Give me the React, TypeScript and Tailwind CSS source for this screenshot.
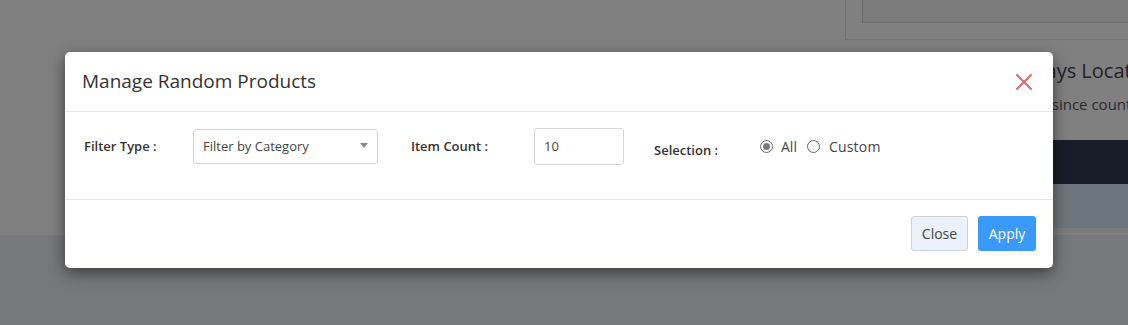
import React from "react";

export default function App() {
  const font = { fontFamily: '"Open Sans", "Noto Sans", sans-serif' };
  return (
    <div className="relative w-[1128px] h-[325px] overflow-hidden flex flex-col" style={font}>
      {/* dimmed page behind */}
      <div className="h-[235px] flex bg-[#808080]">
        <div className="flex-1" />
        <div className="w-[283px] flex flex-col overflow-hidden">
          <div className="h-[40px] border-l border-b border-[#737373] pl-[16px]">
            <div className="h-[23px] border-l border-b border-[#6c6c6c] bg-[#7b7b7b]" />
          </div>
          <div className="pl-[186px] mt-[17px] whitespace-nowrap text-[20px] leading-[28px] text-[#222]">Days Locations</div>
          <div className="pl-[169px] mt-[9px] whitespace-nowrap text-[15px] leading-[20px] text-[#2b2b2b]">Days since countdown</div>
          <div className="mt-[26px] h-[44px] bg-[#181e29]" />
          <div className="h-[44px] bg-[#6d767c]" />
          <div className="h-[5px] bg-[#7b7c7e]" />
        </div>
      </div>
      <div className="flex-1 bg-[#77787c]" />

      {/* modal */}
      <div className="absolute left-[65px] top-[52px] w-[988px] h-[216px] bg-white rounded-[5px] shadow-[0_5px_15px_rgba(0,0,0,0.5)] flex flex-col">
        <div className="h-[60px] border-b border-[#e5e5e5] flex items-center justify-between pl-[17px] pr-[20px]">
          <div className="text-[19px] text-[#333] leading-[28px] -mt-[1px]">Manage Random Products</div>
          <svg width="18" height="18" viewBox="0 0 18 18" className="mt-[1px]">
            <path d="M2 2 L16 16 M16 2 L2 16" stroke="#e0686a" strokeWidth="2" strokeLinecap="round" />
          </svg>
        </div>
        <div className="h-[88px] border-b border-[#e5e5e5] flex items-start pt-[17px] pl-[19px]">
          <div className="w-[109px] h-[35px] flex items-center text-[13px] font-semibold text-[#333]">Filter Type :</div>
          <div className="w-[185px] h-[35px] border border-[#d6d6d6] rounded-[3px] flex items-center justify-between pl-[9px] pr-[9px] pt-[1px]">
            <span className="text-[13px] text-[#444]">Filter by Category</span>
            <svg width="8" height="5" viewBox="0 0 8 5" className="-mt-[3px]"><path d="M0 0 L8 0 L4 5 Z" fill="#888" /></svg>
          </div>
          <div className="ml-[33px] w-[123px] h-[35px] flex items-center text-[13px] font-semibold text-[#333]">Item Count :</div>
          <div className="w-[90px] h-[37px] -mt-[1px] border border-[#d6d6d6] rounded-[3px] flex items-center pl-[9px] text-[13px] text-[#444]">10</div>
          <div className="ml-[30px] w-[106px] h-[35px] flex items-center pt-[9px] text-[13px] font-semibold text-[#333]">Selection :</div>
          <div className="h-[35px] flex items-center text-[14px] text-[#444]">
            <span className="w-[13px] h-[13px] rounded-full border border-[#6f6f6f] flex items-center justify-center">
              <span className="w-[7px] h-[7px] rounded-full bg-[#7a7a7a]" />
            </span>
            <span className="ml-[8px]">All</span>
            <span className="ml-[10px] w-[13px] h-[13px] rounded-full border border-[#666] bg-white" />
            <span className="ml-[9px] tracking-[0.2px]">Custom</span>
          </div>
        </div>
        <div className="flex-1 flex items-start justify-end pt-[16px] pr-[17px] gap-[10px]">
          <button className="w-[57px] h-[35px] rounded-[3px] border border-[#c9d2dc] bg-[#eaf1f9] text-[14px] text-[#444]">Close</button>
          <button className="w-[58px] h-[35px] rounded-[3px] bg-[#3a9afc] text-[14px] text-white">Apply</button>
        </div>
      </div>
    </div>
  );
}
